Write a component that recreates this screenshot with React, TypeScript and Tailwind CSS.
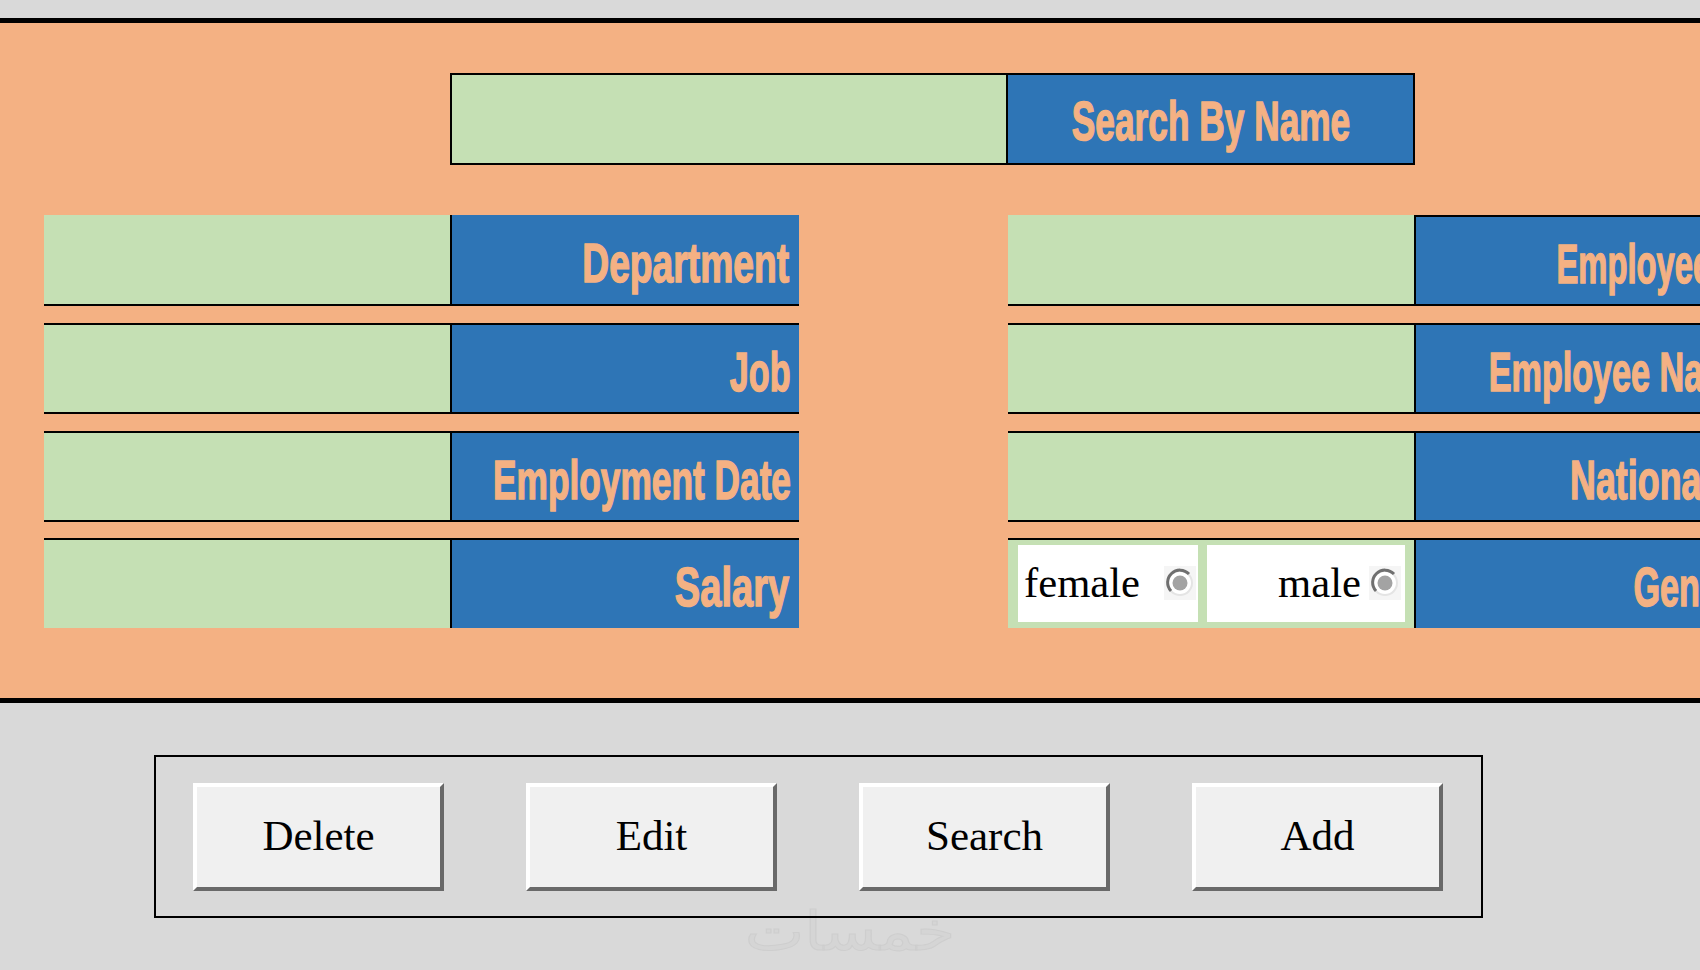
const serif = "font-['Liberation_Serif',serif]";

function Label({ text, scale }: { text: string; scale: string }) {
  return (
    <span
      className={`inline-block whitespace-nowrap font-['Liberation_Sans',sans-serif] font-bold text-[56px] leading-none text-[#f4b183] [-webkit-text-stroke:1.5px_#f4b183] ${scale}`}
    >
      {text}
    </span>
  );
}

function Radio() {
  return (
    <svg width="32" height="34" viewBox="0 0 32 34" className="shrink-0 mb-[2px]">
      <rect x="0" y="0" width="32" height="34" fill="#f5f5f5" />
      <circle cx="16" cy="17" r="12" fill="#ffffff" stroke="#e4e4e4" strokeWidth="2" />
      <path d="M7 25 A12 12 0 0 1 25 8" fill="none" stroke="#6f6f6f" strokeWidth="3" />
      <circle cx="16" cy="17" r="7.5" fill="#a3a3a3" />
    </svg>
  );
}

type Edge = { top?: boolean; bottom?: boolean; greenTop?: boolean };

function Pair({ label, scale, edge, children }: { label: string; scale: string; edge: Edge; children?: React.ReactNode }) {
  const bottom = edge.bottom ? "border-b-2 border-black" : "";
  const blueTop = edge.top ? "border-t-2 border-black" : "";
  const greenTop = edge.greenTop ? "border-t-2 border-black" : "";
  return (
    <div className="flex shrink-0 h-full">
      <div className={`w-[406px] shrink-0 bg-[#c5e0b4] ${greenTop} ${bottom}`}>{children}</div>
      <div className={`w-[349px] shrink-0 flex items-center justify-end pr-[10px] pt-[6px] bg-[#2e75b6] border-l-2 border-black ${blueTop} ${bottom}`}>
        <Label text={label} scale={scale} />
      </div>
    </div>
  );
}

function Row({ className, children }: { className: string; children: React.ReactNode }) {
  return <div className={`flex gap-[209px] ${className}`}>{children}</div>;
}

function ActionButton({ text }: { text: string }) {
  return (
    <button className={`w-[251px] h-[108px] shrink-0 bg-[#f0f0f0] border-[4px] border-t-white border-l-white border-r-[#696969] border-b-[#696969] pb-[2px] text-[43px] text-black ${serif}`}>
      {text}
    </button>
  );
}

export default function App() {
  return (
    <div className="relative w-[1700px] h-[970px] overflow-hidden bg-[#d9d9d9] pt-[18px]">
      <div
        dir="rtl"
        className="absolute left-[747px] top-[905px] w-[206px] text-center font-['DejaVu_Sans',sans-serif] text-[54px] leading-none text-[#d5d5d5] scale-x-[1.17] [-webkit-text-stroke:1px_#cecece]"
      >
        خمسات
      </div>

      <div className="relative h-[685px] border-y-[5px] border-black bg-[#f4b183] pl-[44px] pt-[50px]">
        <div className="ml-[406px] flex w-[965px] h-[92px] border-2 border-black">
          <div className="w-[554px] shrink-0 bg-[#c5e0b4]" />
          <div className="w-[407px] shrink-0 flex items-center justify-center pt-[4px] bg-[#2e75b6] border-l-2 border-black">
            <Label text="Search By Name" scale="origin-center scale-x-[0.63]" />
          </div>
        </div>

        <div className="mt-[50px] flex flex-col gap-[17px]">
          <Row className="h-[91px]">
            <Pair label="Department" scale="origin-right scale-x-[0.665]" edge={{ bottom: true }} />
            <Pair label="Employee ID" scale="origin-right scale-x-[0.585]" edge={{ top: true, bottom: true }} />
          </Row>
          <Row className="h-[91px]">
            <Pair label="Job" scale="origin-right scale-x-[0.61] translate-x-[2px]" edge={{ top: true, greenTop: true, bottom: true }} />
            <Pair label="Employee Name" scale="origin-right scale-x-[0.61]" edge={{ top: true, greenTop: true, bottom: true }} />
          </Row>
          <Row className="h-[91px]">
            <Pair label="Employment Date" scale="origin-right scale-x-[0.63] translate-x-[2px]" edge={{ top: true, greenTop: true, bottom: true }} />
            <Pair label="Nationality" scale="origin-right scale-x-[0.64]" edge={{ top: true, greenTop: true, bottom: true }} />
          </Row>
          <Row className="h-[90px] -mt-px">
            <Pair label="Salary" scale="origin-right scale-x-[0.68]" edge={{ top: true, greenTop: true }} />
            <Pair label="Gender" scale="origin-right scale-x-[0.61]" edge={{ top: true, greenTop: true }}>
              <div className={`flex gap-[9px] pl-[10px] pt-[5px] text-[42.67px] leading-none text-black ${serif}`}>
                <label className="flex w-[180px] h-[77px] items-center justify-between bg-white pl-[6px] pr-[2px]">
                  <span>female</span>
                  <Radio />
                </label>
                <label className="flex w-[198px] h-[77px] items-center justify-end gap-[8px] bg-white pr-[4px]">
                  <span>male</span>
                  <Radio />
                </label>
              </div>
            </Pair>
          </Row>
        </div>
      </div>

      <div className="relative ml-[154px] mt-[52px] flex w-[1329px] h-[163px] gap-[82px] border-2 border-black pl-[37px] pt-[26px]">
        <ActionButton text="Delete" />
        <ActionButton text="Edit" />
        <ActionButton text="Search" />
        <ActionButton text="Add" />
      </div>
    </div>
  );
}
